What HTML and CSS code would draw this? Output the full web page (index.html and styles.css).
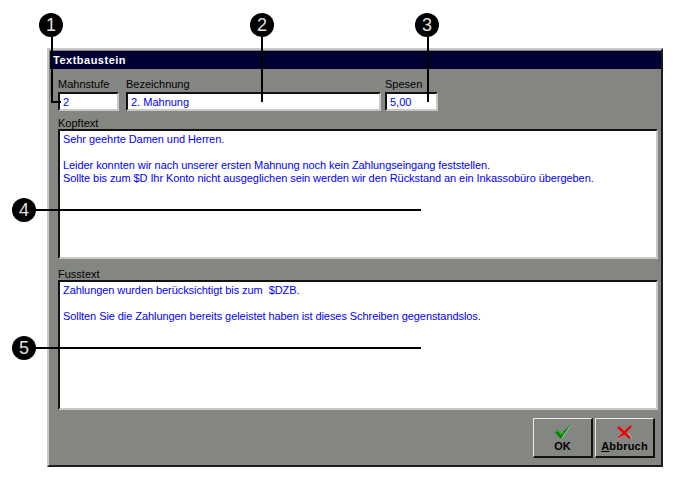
FILE: index.html
```html
<!DOCTYPE html>
<html lang="de">
<head>
    <meta charset="UTF-8">
    <title>Textbaustein</title>
    <link rel="stylesheet" href="styles.css">
</head>
<body>
    <div class="window">
        <div class="title-bar">Textbaustein</div>
        <div class="content">
            <div class="top-row">
                <label class="field field-level">
                    <span class="caption">Mahnstufe</span>
                    <span class="input">2</span>
                </label>
                <label class="field field-name">
                    <span class="caption">Bezeichnung</span>
                    <span class="input">2. Mahnung</span>
                </label>
                <label class="field field-fee">
                    <span class="caption">Spesen</span>
                    <span class="input">5,00</span>
                </label>
            </div>
            <div class="block block-head">
                <span class="caption">Kopftext</span>
                <div class="memo">
                    <p>Sehr geehrte Damen und Herren.</p>
                    <p>&nbsp;</p>
                    <p>Leider konnten wir nach unserer ersten Mahnung noch kein Zahlungseingang feststellen.</p>
                    <p>Sollte bis zum $D Ihr Konto nicht ausgeglichen sein werden wir den Rückstand an ein Inkassobüro übergeben.</p>
                </div>
            </div>
            <div class="block block-foot">
                <span class="caption">Fusstext</span>
                <div class="memo">
                    <p>Zahlungen wurden berücksichtigt bis zum &nbsp;$DZB.</p>
                    <p>&nbsp;</p>
                    <p>Sollten Sie die Zahlungen bereits geleistet haben ist dieses Schreiben gegenstandslos.</p>
                </div>
            </div>
            <div class="buttons">
                <button class="btn">
                    <svg width="22" height="14" viewBox="0 0 22 14">
                        <path d="M3 7 L6 5 L9 9 L18 0 L19 1 L10 13 L8 13 Z" fill="#008000"/>
                        <path d="M4 7 L6 6 L9 10 L12 7" fill="none" stroke="#00d000"/>
                        <path d="M18.5 0.5 L10 13" fill="none" stroke="#e0e0e0" stroke-width="0.8"/>
                    </svg>
                    <span>OK</span>
                </button>
                <button class="btn">
                    <svg width="22" height="14" viewBox="0 0 22 14">
                        <path d="M4 2 L16 13 M17 1 L5 13" fill="none" stroke="#f00000" stroke-width="2.4"/>
                        <path d="M14 8 L18 13 M8 11 L5 14" fill="none" stroke="#c8c8c8" stroke-width="0.8"/>
                    </svg>
                    <span class="btn-label"><u>A</u>bbruch</span>
                </button>
            </div>
        </div>
    </div>

    <!-- Hinweislinien und Nummern -->
    <div class="line line-1"></div>
    <div class="line line-1b"></div>
    <div class="line line-2"></div>
    <div class="line line-3"></div>
    <div class="line line-4"></div>
    <div class="line line-5"></div>
    <div class="badge badge-1">1</div>
    <div class="badge badge-2">2</div>
    <div class="badge badge-3">3</div>
    <div class="badge badge-4">4</div>
    <div class="badge badge-5">5</div>
</body>
</html>
```

FILE: styles.css
```css
body {
    margin: 0;
    background: #fff;
    font-family: "Liberation Sans", Arial, sans-serif;
    font-size: 11px;
}
.window {
    box-sizing: border-box;
    width: 616px;
    height: 419px;
    margin: 48px 0 0 47px;
    background: #848682;
    border: 2px solid;
    border-color: #c8c8c8 #1c1c1c #1c1c1c #c8c8c8;
    padding: 1px 0 0 1px;
    display: flex;
    flex-direction: column;
}
.title-bar {
    height: 18px;
    line-height: 18px;
    padding-left: 3px;
    background: #000033;
    color: #fff;
    font-weight: bold;
    letter-spacing: 0.5px;
}
.content {
    flex: 1;
    padding: 8px 4px 7px 8px;
    display: flex;
    flex-direction: column;
}
.top-row {
    display: flex;
    gap: 7px;
}
.field {
    display: flex;
    flex-direction: column;
}
.field-level { width: 61px; }
.field-name { width: 255px; margin-right: -3px; }
.field-fee { width: 53px; }
.caption {
    display: block;
    height: 15px;
    line-height: 15px;
    color: #000;
}
.block .caption {
    line-height: 18px;
}
.input {
    box-sizing: border-box;
    display: block;
    height: 19px;
    line-height: 17px;
    padding-left: 3px;
    background: #fff;
    color: #0000ff;
    border: 2px solid;
    border-color: #111 #c8c8c8 #c8c8c8 #111;
}
.block-head { margin-top: 3px; }
.block-foot { margin-top: 6px; }
.memo {
    box-sizing: border-box;
    width: 600px;
    height: 130px;
    padding: 2px 3px;
    background: #fff;
    color: #0000ff;
    line-height: 13px;
    letter-spacing: -0.07px;
    border: 2px solid;
    border-color: #111 #c8c8c8 #c8c8c8 #111;
}
.memo p {
    margin: 0;
}
.buttons {
    display: flex;
    justify-content: flex-end;
    gap: 2px;
    margin-top: 8px;
    padding-right: 2px;
}
.btn {
    box-sizing: border-box;
    width: 60px;
    height: 40px;
    padding: 6px 0 0;
    display: flex;
    flex-direction: column;
    align-items: center;
    background: #848682;
    border-style: solid;
    border-width: 1px 2px 2px 1px;
    border-color: #e8e8e8 #111 #111 #e8e8e8;
    font-family: "Liberation Sans", Arial, sans-serif;
    font-size: 11px;
    font-weight: bold;
    color: #000;
}
.btn span {
    line-height: 14px;
}
.btn .btn-label {
    letter-spacing: 0.2px;
}
.line {
    position: absolute;
    background: #000;
}
.line-1 { left: 51px; top: 36px; width: 2px; height: 67px; }
.line-1b { left: 51px; top: 101px; width: 10px; height: 2px; }
.line-2 { left: 261px; top: 36px; width: 2px; height: 66px; }
.line-3 { left: 427px; top: 36px; width: 2px; height: 66px; }
.line-4 { left: 30px; top: 209px; width: 391px; height: 2px; }
.line-5 { left: 30px; top: 347px; width: 391px; height: 2px; }
.badge {
    position: absolute;
    width: 24px;
    height: 24px;
    line-height: 24px;
    border-radius: 50%;
    background: #000;
    color: #e0e0e0;
    text-align: center;
    font-size: 18px;
}
.badge-1 { left: 39px; top: 13px; }
.badge-2 { left: 250px; top: 13px; }
.badge-3 { left: 415px; top: 13px; }
.badge-4 { left: 12px; top: 198px; }
.badge-5 { left: 12px; top: 336px; }
```
